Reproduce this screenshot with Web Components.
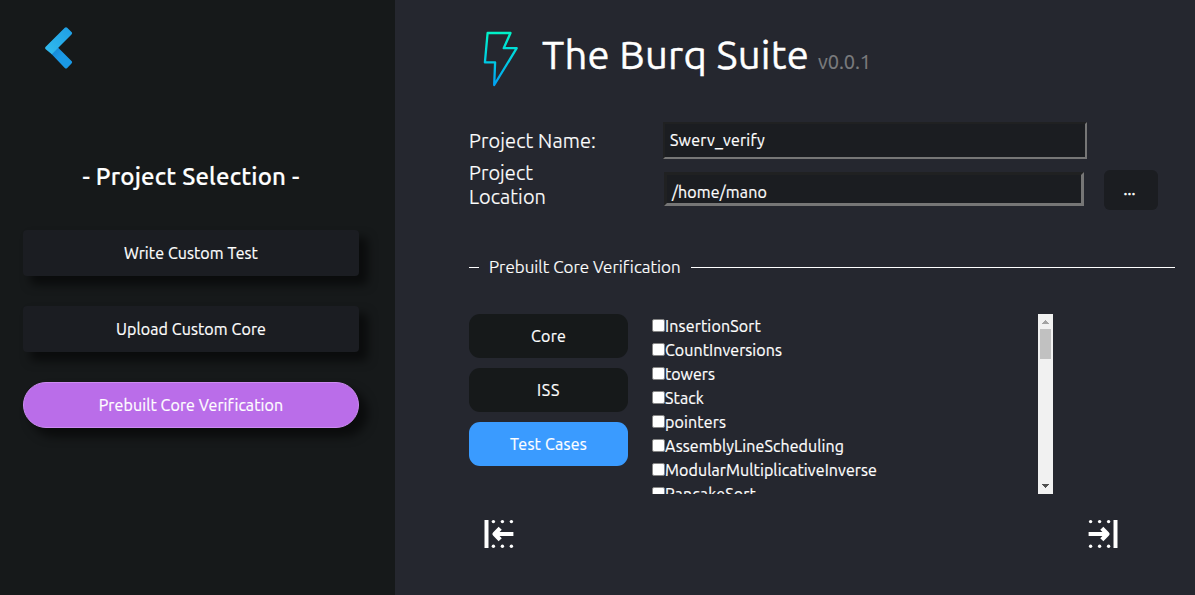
<!DOCTYPE html>
<html lang="en">
<head>
<meta charset="utf-8">
<title>The Burq Suite</title>
<style>
html,body{margin:0;height:100%;background:#25272f;overflow:hidden}
body{font-family:Ubuntu,"Noto Sans","Open Sans",sans-serif;font-size:16px;color:#fff;-webkit-text-stroke:.2px}
</style>
</head>
<body>
<burq-app></burq-app>
<script>
const define = (name, html, ready) => customElements.define(name, class extends HTMLElement {
  constructor() {
    super();
    this.attachShadow({mode: 'open'}).innerHTML = html;
  }
  connectedCallback() { if (ready) ready.call(this, this.shadowRoot); }
});

/* A single line of text tracked to its intended width. */
define('fit-text', `<style>:host{display:inline-block;white-space:pre;line-height:inherit}span{display:inline-block}</style><span><slot></slot></span>`,
function (root) {
  const s = root.querySelector('span');
  const w = parseFloat(this.getAttribute('w'));
  const n = this.textContent.length;
  s.style.letterSpacing = '0px';
  const diff = w - s.getBoundingClientRect().width;
  if (Math.abs(diff) > .4) s.style.letterSpacing = (diff / n).toFixed(3) + 'px';
});

define('side-button', `<style>
:host{display:flex;align-items:center;justify-content:center;box-sizing:border-box;width:336px;height:46px;background:#1b1d22;border-radius:4px;box-shadow:8px 8px 10px 1px rgba(0,0,0,.53)}
:host([active]){background:#ba6de9;border:1px solid #cd8bf3;border-radius:23px}
</style><slot></slot>`);

define('tab-button', `<style>
:host{display:flex;align-items:center;justify-content:center;width:159px;height:44px;background:#16191a;border-radius:11px}
:host([active]){background:#3a9bff}
</style><slot></slot>`);

define('text-field', `<style>
:host{display:flex;align-items:center;box-sizing:border-box;width:424px;height:37px;padding:0 0 2px 5px;background:#1b1d21;border:2px solid;border-color:#202122 #767676 #767676 #202122}
:host([deep]){width:420px;height:34px;padding:6px 0 0 5px;border-width:3px}
</style><slot></slot>`);

define('test-item', `<style>
:host{display:flex;height:24px;line-height:24px}
i{box-sizing:border-box;width:13px;height:13px;margin-top:5px;background:#fff;border:1px solid #858585;border-radius:2px;flex:none}
</style><i></i><slot></slot>`);

define('scroll-bar', `<style>
:host{display:flex;flex-direction:column;align-items:center;width:15px;height:180px;background:#f1f1f1}
svg{display:block;width:15px;height:15px}
b{width:11px;height:30px;background:#c1c1c1;margin-bottom:auto}
</style><svg shape-rendering="crispEdges"><path d="M4 10h7L7.5 6z" fill="#a3a3a3"/></svg><b></b><svg shape-rendering="crispEdges"><path d="M4 5h7L7.5 9z" fill="#505050"/></svg>`);

define('edge-arrow', `<style>
:host{display:block;width:30px;height:30px}
:host([flip]) svg{transform:scaleX(-1)}
svg{display:block}
</style><svg width="30" height="30" viewBox="0 0 30 30"><path d="M.5 1h4v28h-4z" fill="#fff"/><path d="M29.4 15H10" fill="none" stroke="#fff" stroke-width="4"/><path d="M16.2 9.3L10.6 15l5.6 5.7" fill="none" stroke="#fff" stroke-width="4.4" stroke-linejoin="round"/><g fill="#fff"><circle cx="9.4" cy="2.6" r="1.7"/><circle cx="18.4" cy="2.6" r="1.7"/><circle cx="27.4" cy="2.6" r="1.7"/><circle cx="9.4" cy="27.3" r="1.7"/><circle cx="18.4" cy="27.3" r="1.7"/><circle cx="27.4" cy="27.3" r="1.7"/></g></svg>`);

define('burq-sidebar', `<style>
:host{display:flex;flex-direction:column;box-sizing:border-box;width:395px;height:595px;padding:27px 36px 0 23px;background:#16191a;flex:none}
.back{display:block;margin-left:21px}
h2{margin:90px 0 0;height:36px;line-height:36px;text-align:center;font-size:24px;font-weight:500}
nav{display:flex;flex-direction:column;gap:30px;margin-top:35px}
</style>
<svg class="back" width="30" height="42" viewBox="0 0 30 42">
<defs><linearGradient id="a" x1="0" y1="1" x2="1" y2="0"><stop stop-color="#32bdef"/><stop offset="1" stop-color="#1e9de5"/></linearGradient><linearGradient id="b" x1="0" y1="0" x2="1" y2="1"><stop stop-color="#1681cf"/><stop offset=".45" stop-color="#1a99e6"/></linearGradient></defs>
<path d="M7 26.5L13.5 20 27.5 34Q28.7 35.2 27.5 36.4L23.2 41Q22 42.1 20.8 41z" fill="url(#b)"/>
<path d="M1.7 19.7L20.8.8Q22 -.3 23.2.8L27.5 5Q28.7 6.2 27.5 7.4L7.8 27.2 1.7 22.2Q.4 21 1.7 19.7z" fill="url(#a)"/></svg>
<h2><fit-text w="217">- Project Selection -</fit-text></h2>
<nav>
<side-button><fit-text w="134">Write Custom Test</fit-text></side-button>
<side-button><fit-text w="150">Upload Custom Core</fit-text></side-button>
<side-button active><fit-text w="184">Prebuilt Core Verification</fit-text></side-button>
</nav>`);

define('burq-main', `<style>
:host{display:block;box-sizing:border-box;width:800px;height:595px;padding:30px 20px 0 74px;background:#25272f}
header{display:flex;height:56px}
header svg{margin-left:14px;flex:none}
h1{margin:-5px 0 0 23px;font-size:40px;line-height:60px;height:60px;font-weight:400;-webkit-text-stroke:.4px}
small{margin:17px 0 0 9px;font-size:20px;line-height:30px;color:#7b7c7e}
.form{display:grid;grid-template-columns:194px 421px auto;margin-top:36px;height:88px;grid-template-rows:37px 51px}
label{font-size:20px;line-height:24px;font-weight:300;display:flex;flex-direction:column;align-items:flex-start}
.n{padding-top:7px}.l{padding-top:2px}
.name{grid-column:2/4}
.loc{margin:13px 0 0 1px}
.more{margin:11px 0 0 20px;width:54px;height:40px;border-radius:6px;background:#1b1d21;display:flex;align-items:center;justify-content:center;box-sizing:border-box;padding:0 3px 2px 0;-webkit-text-stroke:.5px}
.legend{display:flex;align-items:center;height:26px;margin-top:44px;font-size:17px;font-weight:300}
.legend fit-text{margin-top:-2px}
.legend:before{content:"";width:10px;height:1px;background:#fff;margin-right:10px}
.legend:after{content:"";flex:1;height:1px;background:#fff;margin-left:10px}
.body{display:flex;height:180px;margin-top:34px}
.tabs{display:flex;flex-direction:column;gap:10px}
.list{width:386px;height:180px;overflow:hidden;margin-left:24px}
footer{display:flex;justify-content:space-between;margin:25px 57px 0 15px}
</style>
<header>
<svg width="36" height="57" viewBox="0 0 36 57"><defs><linearGradient id="g" x1="0" y1="0" x2="0" y2="1"><stop stop-color="#00f2c8"/><stop offset=".45" stop-color="#00d2df"/><stop offset="1" stop-color="#00a2f4"/></linearGradient></defs><path d="M4.6 3h22.9L20.7 18.2h13L11.2 55l.9-22.6H1.9z" fill="none" stroke="url(#g)" stroke-width="2.3" stroke-linejoin="round"/></svg>
<h1><fit-text w="267">The Burq Suite</fit-text></h1><small><fit-text w="53">v0.0.1</fit-text></small>
</header>
<div class="form">
<label class="n"><fit-text w="127">Project Name:</fit-text></label>
<text-field class="name"><fit-text w="95">Swerv_verify</fit-text></text-field>
<label class="l"><fit-text w="64">Project</fit-text><fit-text w="77">Location</fit-text></label>
<text-field deep class="loc"><fit-text w="95">/home/mano</fit-text></text-field>
<div class="more"><fit-text w="12">...</fit-text></div>
</div>
<div class="legend"><fit-text w="191">Prebuilt Core Verification</fit-text></div>
<div class="body">
<div class="tabs"><tab-button><fit-text w="35">Core</fit-text></tab-button><tab-button><fit-text w="23">ISS</fit-text></tab-button><tab-button active><fit-text w="77">Test Cases</fit-text></tab-button></div>
<div class="list">
<test-item><fit-text w="96">InsertionSort</fit-text></test-item>
<test-item><fit-text w="117">CountInversions</fit-text></test-item>
<test-item><fit-text w="50">towers</fit-text></test-item>
<test-item><fit-text w="39">Stack</fit-text></test-item>
<test-item><fit-text w="61">pointers</fit-text></test-item>
<test-item><fit-text w="179">AssemblyLineScheduling</fit-text></test-item>
<test-item><fit-text w="212">ModularMultiplicativeInverse</fit-text></test-item>
<test-item><fit-text w="91">PancakeSort</fit-text></test-item>
</div>
<scroll-bar></scroll-bar>
</div>
<footer><edge-arrow></edge-arrow><edge-arrow flip></edge-arrow></footer>`);

define('burq-app', `<style>:host{display:flex;width:1195px;height:595px;overflow:hidden}</style><burq-sidebar></burq-sidebar><burq-main></burq-main>`);
</script>
</body>
</html>
